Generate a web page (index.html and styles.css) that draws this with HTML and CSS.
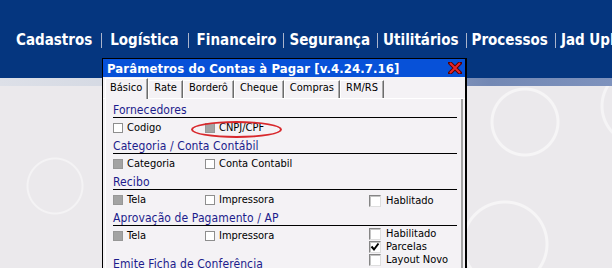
FILE: index.html
```html
<!DOCTYPE html>
<html lang="pt-BR">
<head>
  <meta charset="UTF-8">
  <title>Parâmetros do Contas à Pagar</title>
  <link rel="stylesheet" href="styles.css">
</head>
<body>

<header class="topbar">
  <nav class="menu">
    <span class="item">Cadastros</span><span class="sep wide"></span>
    <span class="item">Logística</span><span class="sep wide"></span>
    <span class="item">Financeiro</span><span class="sep"></span>
    <span class="item">Segurança</span><span class="sep"></span>
    <span class="item">Utilitários</span><span class="sep"></span>
    <span class="item">Processos</span><span class="sep"></span>
    <span class="item">Jad Upload</span>
  </nav>
</header>
<div class="strip"></div>

<main class="desk">
  <div class="dialog">
    <div class="titlebar">
      <span>Parâmetros do Contas à Pagar [v.4.24.7.16]</span>
      <svg class="close" width="14" height="12" viewBox="0 0 14 12">
        <path d="M2 1 L12 11 M12 1 L2 11" stroke="#5a0000" stroke-width="4" stroke-linecap="square"/>
        <path d="M2 1 L12 11 M12 1 L2 11" stroke="#e8262a" stroke-width="2"/>
      </svg>
    </div>

    <div class="tabs">
      <span class="tab active">Básico</span>
      <span class="tab">Rate</span>
      <span class="tab">Borderô</span>
      <span class="tab">Cheque</span>
      <span class="tab">Compras</span>
      <span class="tab">RM/RS</span>
    </div>

    <div class="panel">
      <div class="group">Fornecedores</div>
      <div class="row">
        <label class="opt"><i class="box"></i>Codigo</label>
        <label class="opt marked"><i class="box on"></i>CNPJ/CPF</label>
      </div>

      <div class="group">Categoria / Conta Contábil</div>
      <div class="row">
        <label class="opt"><i class="box on"></i>Categoria</label>
        <label class="opt"><i class="box"></i>Conta Contabil</label>
      </div>

      <div class="group">Recibo</div>
      <div class="row">
        <label class="opt"><i class="box on"></i>Tela</label>
        <label class="opt"><i class="box"></i>Impressora</label>
        <div class="stack">
          <label class="chk"><i class="box3d"></i>Hablitado</label>
        </div>
      </div>

      <div class="group">Aprovação de Pagamento / AP</div>
      <div class="row tall">
        <label class="opt"><i class="box on"></i>Tela</label>
        <label class="opt"><i class="box"></i>Impressora</label>
        <div class="stack up">
          <label class="chk"><i class="box3d"></i>Habilitado</label>
          <label class="chk"><i class="box3d"><svg width="10" height="10" viewBox="0 0 10 10"><path d="M1.5 4.5 L4 7.5 L8.5 1.5" fill="none" stroke="#000" stroke-width="2"/></svg></i>Parcelas</label>
          <label class="chk"><i class="box3d"></i>Layout Novo</label>
        </div>
      </div>

      <div class="group">Emite Ficha de Conferência</div>
    </div>
  </div>
</main>

</body>
</html>
```

FILE: styles.css
```css
body { margin: 0; width: 612px; height: 268px; overflow: hidden; background: #ebe9ec; font-family: "DejaVu Sans Condensed", "DejaVu Sans", sans-serif; }

.topbar { background: #05367f; height: 78px; display: flex; align-items: flex-end; overflow: hidden; }
.menu { display: flex; align-items: center; padding: 0 0 29px 16px; white-space: nowrap; color: #fff; font-weight: bold; font-size: 15px; }
.menu .sep { width: 1px; height: 15px; background: #aab4cc; margin: 0 5px 0 7px; }
.menu .sep.wide { margin: 0 8px 0 9px; }

.strip { height: 8px; background: linear-gradient(90deg, #dde0e8 0%, #cdd3df 35%, #7388b4 80%, #7e92bd 100%); }

.desk { position: relative; height: 182px;
  background:
    radial-gradient(circle at 525px 36px, transparent 31px, rgba(255,255,255,.55) 32px, rgba(255,255,255,.55) 34px, transparent 35px),
    radial-gradient(circle at 505px 158px, transparent 40px, rgba(255,255,255,.55) 41px, rgba(255,255,255,.55) 43px, transparent 44px),
    radial-gradient(circle at 640px 20px, transparent 36px, rgba(255,255,255,.5) 37px, rgba(255,255,255,.5) 39px, transparent 40px),
    radial-gradient(circle at 55px 100px, transparent 26px, rgba(255,255,255,.45) 27px, rgba(255,255,255,.45) 28px, transparent 29px),
    #ebe9ec; }

/* janela sobreposta ao menu */
.dialog { position: absolute; left: 102px; top: -28px; width: 362px; height: 240px; background: #f4f2f5; border: 1px solid #000; border-right-width: 2px; }

.titlebar { height: 18px; background: #0751d8; color: #fff; display: flex; align-items: center; justify-content: space-between; padding: 0 3px 0 4px; font-weight: bold; font-size: 13px; letter-spacing: 0.1px; }
.titlebar .close { display: block; }

.tabs { display: flex; align-items: flex-end; height: 21px; padding-left: 2px; border-bottom: 1px solid #fff; }
.tab { font-size: 11px; line-height: 13px; padding: 0 5px 4px; border: 1px solid; border-color: #fff #6c6c6c transparent #fff; border-bottom: 0; box-shadow: inset -1px 0 #a9a9a9; }
.tab.active { padding: 2px 5px 5px 4px; margin-bottom: -1px; background: #f4f2f5; }

.panel { margin: 0 2px; padding: 4px 4px 0 7px; border-left: 1px solid #fff; border-right: 2px solid #a3a3a3; height: 200px; }

.group { font-size: 12px; line-height: 14px; color: #1c1c8c; letter-spacing: 0.1px; border-bottom: 1px solid #000; }
.group:last-child { border-bottom: 0; margin-top: 1px; }

.row { display: grid; grid-template-columns: 92px 164px auto; align-items: start; height: 16px; padding-top: 5px; font-size: 11px; }
.row.tall { height: 25px; }

.opt { display: flex; align-items: center; gap: 4px; line-height: 10px; }
.box { display: block; width: 10px; height: 10px; box-sizing: border-box; border: 1px solid #8e8e8e; background: #fff; }
.box.on { background: #a3a3a3; border-color: #979797; }

.marked { position: relative; }
.marked::after { content: ""; position: absolute; left: -14px; top: -2px; width: 91px; height: 17px; box-sizing: border-box; border: 2px solid #d8282c; border-radius: 50%; }

.stack { display: flex; flex-direction: column; margin-top: -1px; }
.stack.up { margin-top: -4px; }
.chk { display: flex; align-items: center; gap: 5px; height: 13px; line-height: 12px; }
.box3d { display: flex; align-items: center; justify-content: center; width: 12px; height: 12px; box-sizing: border-box; background: #fff; border: 1px solid; border-color: #858585 #dedede #dedede #858585; box-shadow: inset 1px 1px #c4c4c4; }
```
